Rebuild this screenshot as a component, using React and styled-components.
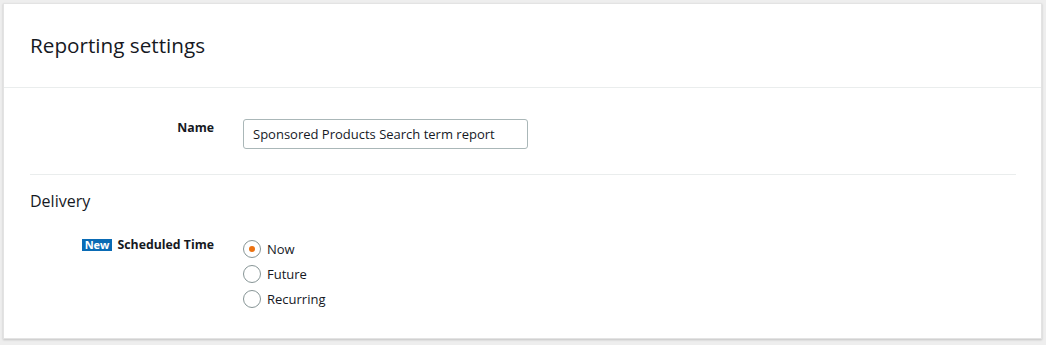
import React from 'react';
import styled, { createGlobalStyle } from 'styled-components';

const GlobalStyle = createGlobalStyle`
  html, body {
    margin: 0;
    padding: 0;
    background: #eeeeee;
    font-family: "Open Sans", "Liberation Sans", sans-serif;
    color: #16191f;
  }
`;

const Page = styled.div`
  padding: 3px 4px 4px 3px;
`;

const Card = styled.div`
  background: #ffffff;
  border: 1px solid #e3e3e3;
  box-shadow: 0 1px 2px rgba(0, 0, 0, 0.18);
  height: 336px;
  box-sizing: border-box;
`;

const Header = styled.div`
  height: 83px;
  padding: 0 26px;
  display: flex;
  align-items: center;
  border-bottom: 1px solid #eaeded;
`;

const Title = styled.h2`
  margin: 0;
  font-size: 20.7px;
  font-weight: 400;
  color: #16191f;
  padding-bottom: 2px;
`;

const Body = styled.div`
  padding: 31px 25px 0 26px;
`;

const Row = styled.div`
  display: grid;
  grid-template-columns: 184px 1fr;
  column-gap: 29px;
  align-items: start;
`;

const Label = styled.div`
  display: flex;
  justify-content: flex-end;
  align-items: center;
  gap: 5px;
  font-size: 12.3px;
  font-weight: 700;
  line-height: 16px;
  padding-top: ${(p) => p.$top || 0}px;
`;

const Badge = styled.span`
  background: #0a6bb5;
  color: #ffffff;
  font-size: 11px;
  font-weight: 700;
  line-height: 12px;
  padding: 0 3px;
`;

const Input = styled.input`
  width: 285px;
  height: 30px;
  box-sizing: border-box;
  border: 1px solid #aab7b8;
  border-radius: 3px;
  padding: 0 9px;
  font-family: inherit;
  font-size: 13px;
  color: #16191f;
  outline: none;
`;

const Divider = styled.hr`
  border: 0;
  border-top: 1px solid #eaeded;
  margin: 25px 0 15px;
`;

const Section = styled.h3`
  margin: 0 0 25px;
  font-size: 16px;
  font-weight: 400;
  line-height: 22px;
  color: #16191f;
`;

const RadioList = styled.div`
  display: flex;
  flex-direction: column;
  gap: 5px;
  padding-top: 2px;
`;

const RadioRow = styled.label`
  display: flex;
  align-items: center;
  gap: 6px;
  font-size: 13px;
  line-height: 20px;
  color: #16191f;
`;

const Circle = styled.span`
  width: 18px;
  height: 18px;
  box-sizing: border-box;
  border: 1px solid #879596;
  border-radius: 50%;
  display: flex;
  align-items: center;
  justify-content: center;
  &::after {
    content: '';
    width: 6px;
    height: 6px;
    border-radius: 50%;
    background: #ec7211;
    display: ${(p) => (p.$checked ? 'block' : 'none')};
  }
`;

const options = ['Now', 'Future', 'Recurring'];

export default function App() {
  return (
    <Page>
      <GlobalStyle />
      <Card>
        <Header>
          <Title>Reporting settings</Title>
        </Header>
        <Body>
          <Row>
            <Label $top={1}>Name</Label>
            <Input defaultValue="Sponsored Products Search term report" />
          </Row>
          <Divider />
          <Section>Delivery</Section>
          <Row>
            <Label $top={0}>
              <Badge>New</Badge>
              Scheduled Time
            </Label>
            <RadioList>
              {options.map((o, i) => (
                <RadioRow key={o}>
                  <Circle $checked={i === 0} />
                  {o}
                </RadioRow>
              ))}
            </RadioList>
          </Row>
        </Body>
      </Card>
    </Page>
  );
}
